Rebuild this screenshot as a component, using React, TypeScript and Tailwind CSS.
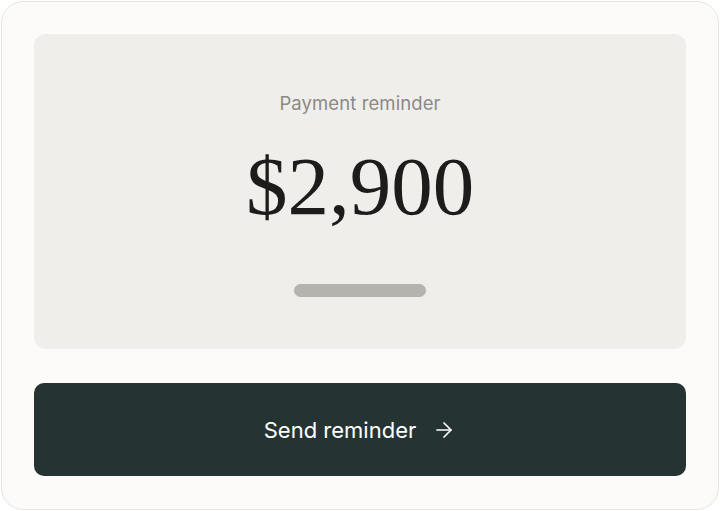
import { ArrowRight } from 'lucide-react';

export default function App() {
  return (
    <div className="w-[720px] h-[511px] bg-white p-px font-['Inter',sans-serif]">
      <div className="h-full rounded-[22px] border border-[#e6e5e1] bg-[#fcfbf9] p-[32px] flex flex-col gap-[34px]">
        {/* Amount panel */}
        <div className="h-[315px] rounded-[12px] bg-[#efeeea] flex flex-col items-center pt-[56px]">
          <p className="text-[18.5px] leading-[26px] text-[#8b8a86] tracking-[0.1px]">Payment reminder</p>
          <p className="mt-[29px] text-[83px] leading-[83px] text-[#1d1c1a] font-['Liberation_Serif',serif]">
            $2,900
          </p>
          <div className="mt-[56px] h-[13px] w-[132px] rounded-full bg-[#b4b3ae]" />
        </div>

        {/* Action */}
        <button className="h-[93px] rounded-[10px] bg-[#253433] flex items-center justify-center gap-[16px] text-white">
          <span className="text-[22px] leading-none">Send reminder</span>
          <ArrowRight size={24} strokeWidth={1.7} />
        </button>
      </div>
    </div>
  );
}
